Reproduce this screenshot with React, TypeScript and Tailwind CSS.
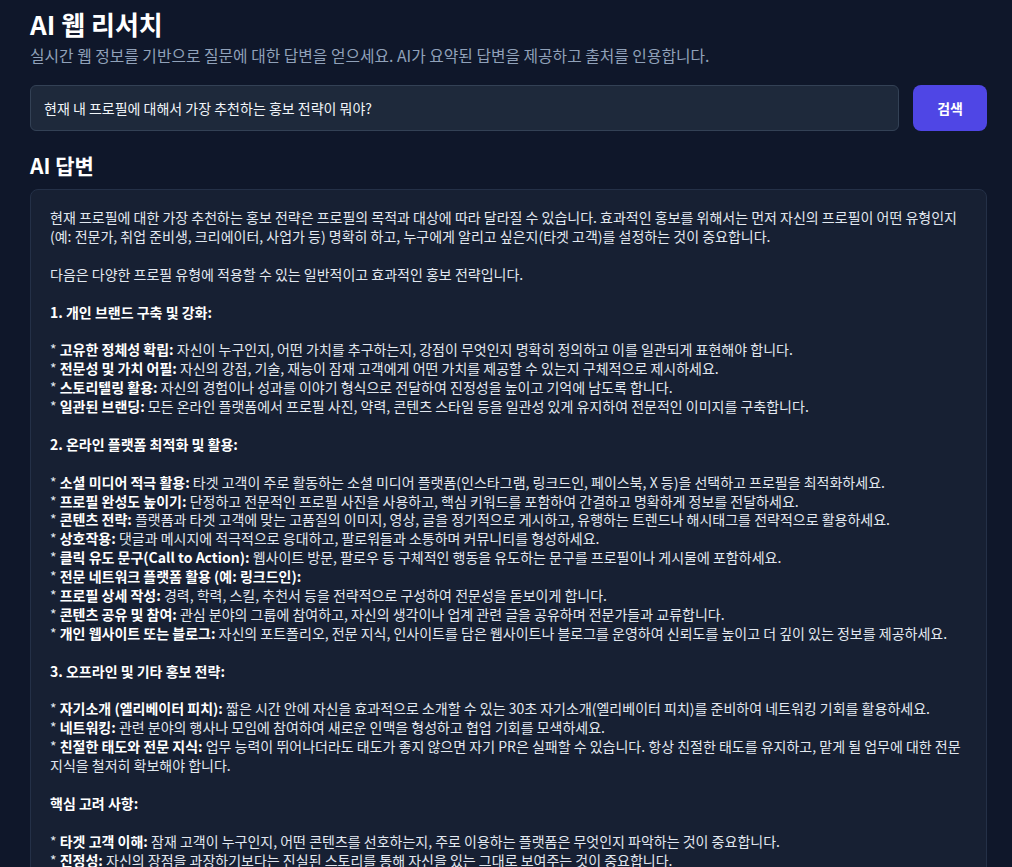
import React from 'react';

type Line = { bullet?: boolean; label?: string; text?: string; heading?: string } | null;

const lines: Line[] = [
  { text: '현재 프로필에 대한 가장 추천하는 홍보 전략은 프로필의 목적과 대상에 따라 달라질 수 있습니다. 효과적인 홍보를 위해서는 먼저 자신의 프로필이 어떤 유형인지' },
  { text: '(예: 전문가, 취업 준비생, 크리에이터, 사업가 등) 명확히 하고, 누구에게 알리고 싶은지(타겟 고객)를 설정하는 것이 중요합니다.' },
  null,
  { text: '다음은 다양한 프로필 유형에 적용할 수 있는 일반적이고 효과적인 홍보 전략입니다.' },
  null,
  { heading: '1. 개인 브랜드 구축 및 강화:' },
  null,
  { bullet: true, label: '고유한 정체성 확립:', text: ' 자신이 누구인지, 어떤 가치를 추구하는지, 강점이 무엇인지 명확히 정의하고 이를 일관되게 표현해야 합니다.' },
  { bullet: true, label: '전문성 및 가치 어필:', text: ' 자신의 강점, 기술, 재능이 잠재 고객에게 어떤 가치를 제공할 수 있는지 구체적으로 제시하세요.' },
  { bullet: true, label: '스토리텔링 활용:', text: ' 자신의 경험이나 성과를 이야기 형식으로 전달하여 진정성을 높이고 기억에 남도록 합니다.' },
  { bullet: true, label: '일관된 브랜딩:', text: ' 모든 온라인 플랫폼에서 프로필 사진, 약력, 콘텐츠 스타일 등을 일관성 있게 유지하여 전문적인 이미지를 구축합니다.' },
  null,
  { heading: '2. 온라인 플랫폼 최적화 및 활용:' },
  null,
  { bullet: true, label: '소셜 미디어 적극 활용:', text: ' 타겟 고객이 주로 활동하는 소셜 미디어 플랫폼(인스타그램, 링크드인, 페이스북, X 등)을 선택하고 프로필을 최적화하세요.' },
  { bullet: true, label: '프로필 완성도 높이기:', text: ' 단정하고 전문적인 프로필 사진을 사용하고, 핵심 키워드를 포함하여 간결하고 명확하게 정보를 전달하세요.' },
  { bullet: true, label: '콘텐츠 전략:', text: ' 플랫폼과 타겟 고객에 맞는 고품질의 이미지, 영상, 글을 정기적으로 게시하고, 유행하는 트렌드나 해시태그를 전략적으로 활용하세요.' },
  { bullet: true, label: '상호작용:', text: ' 댓글과 메시지에 적극적으로 응대하고, 팔로워들과 소통하며 커뮤니티를 형성하세요.' },
  { bullet: true, label: '클릭 유도 문구(Call to Action):', text: ' 웹사이트 방문, 팔로우 등 구체적인 행동을 유도하는 문구를 프로필이나 게시물에 포함하세요.' },
  { bullet: true, label: '전문 네트워크 플랫폼 활용 (예: 링크드인):' },
  { bullet: true, label: '프로필 상세 작성:', text: ' 경력, 학력, 스킬, 추천서 등을 전략적으로 구성하여 전문성을 돋보이게 합니다.' },
  { bullet: true, label: '콘텐츠 공유 및 참여:', text: ' 관심 분야의 그룹에 참여하고, 자신의 생각이나 업계 관련 글을 공유하며 전문가들과 교류합니다.' },
  { bullet: true, label: '개인 웹사이트 또는 블로그:', text: ' 자신의 포트폴리오, 전문 지식, 인사이트를 담은 웹사이트나 블로그를 운영하여 신뢰도를 높이고 더 깊이 있는 정보를 제공하세요.' },
  null,
  { heading: '3. 오프라인 및 기타 홍보 전략:' },
  null,
  { bullet: true, label: '자기소개 (엘리베이터 피치):', text: ' 짧은 시간 안에 자신을 효과적으로 소개할 수 있는 30초 자기소개(엘리베이터 피치)를 준비하여 네트워킹 기회를 활용하세요.' },
  { bullet: true, label: '네트워킹:', text: ' 관련 분야의 행사나 모임에 참여하여 새로운 인맥을 형성하고 협업 기회를 모색하세요.' },
  { bullet: true, label: '친절한 태도와 전문 지식:', text: ' 업무 능력이 뛰어나더라도 태도가 좋지 않으면 자기 PR은 실패할 수 있습니다. 항상 친절한 태도를 유지하고, 맡게 될 업무에 대한 전문' },
  { text: '지식을 철저히 확보해야 합니다.' },
  null,
  { heading: '핵심 고려 사항:' },
  null,
  { bullet: true, label: '타겟 고객 이해:', text: ' 잠재 고객이 누구인지, 어떤 콘텐츠를 선호하는지, 주로 이용하는 플랫폼은 무엇인지 파악하는 것이 중요합니다.' },
  { bullet: true, label: '진정성:', text: ' 자신의 장점을 과장하기보다는 진실된 스토리를 통해 자신을 있는 그대로 보여주는 것이 중요합니다.' },
  { bullet: true, label: '꾸준함:', text: ' 일회성 홍보보다는 꾸준하게 활동하며 신뢰를 쌓아가는 것이 중요합니다.' },
  { bullet: true, label: '성과 측정:', text: ' 홍보 활동의 결과를 분석하고 전략을 지속적으로 개선하세요.' },
];

const AnswerLine: React.FC<{ line: Line }> = ({ line }) => {
  if (!line) return <div className="h-[18.9px]" />;
  if (line.heading) return <div className="font-bold text-white">{line.heading}</div>;
  return (
    <div className="whitespace-nowrap">
      {line.bullet && '* '}
      {line.label && <span className="font-bold text-white">{line.label}</span>}
      {line.text}
    </div>
  );
};

export default function App() {
  return (
    <div
      className="min-h-screen bg-[#0f172a] pl-[30px] pr-[25px] pt-2 text-slate-200"
      style={{ fontFamily: '"Noto Sans CJK KR", "Noto Sans", sans-serif' }}
    >
      <h1 className="text-[26px] leading-8 font-bold text-white">AI 웹 리서치</h1>
      <p className="mt-1 text-[15.8px] leading-6 text-slate-400">
        실시간 웹 정보를 기반으로 질문에 대한 답변을 얻으세요. AI가 요약된 답변을 제공하고 출처를 인용합니다.
      </p>

      <div className="mt-[17px] flex gap-[14px]">
        <div className="flex-1 rounded-md border border-[#334155] bg-[#1e293b] px-[13px] py-3 text-sm leading-5 text-slate-100">
          현재 내 프로필에 대해서 가장 추천하는 홍보 전략이 뭐야?
        </div>
        <button className="rounded-lg bg-[#4f46e5] px-6 text-sm font-bold text-white">검색</button>
      </div>

      <h2 className="mt-5 text-[21px] leading-7 font-bold text-white">AI 답변</h2>

      <div className="mt-2.5 rounded-lg border border-[#243047] bg-[#172033] px-[19px] pt-[18px] pb-6 text-sm leading-[18.9px] text-slate-200">
        {lines.map((line, i) => (
          <AnswerLine key={i} line={line} />
        ))}
      </div>
    </div>
  );
}
